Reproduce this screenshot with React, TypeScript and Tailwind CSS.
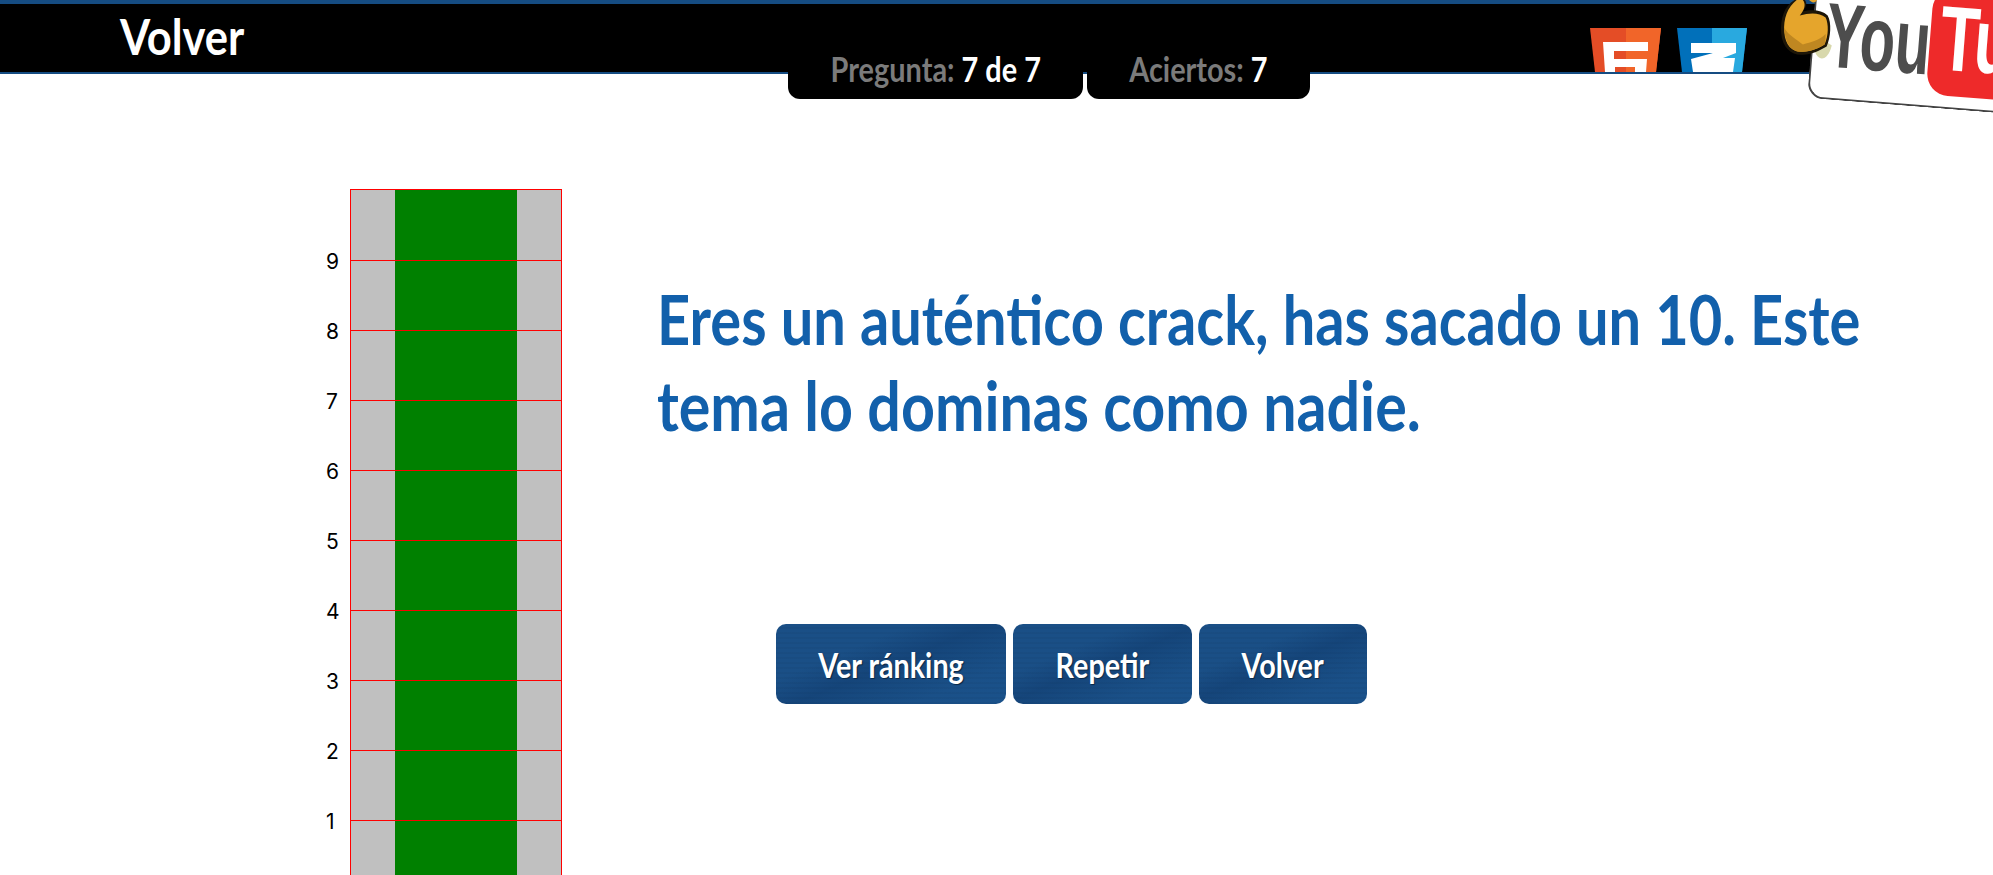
const rows = [null, 9, 8, 7, 6, 5, 4, 3, 2, 1]

const buttons = [
  { label: 'Ver ránking', width: 'w-[230px]' },
  { label: 'Repetir', width: 'w-[179px]' },
  { label: 'Volver', width: 'w-[168px]' },
]

function Html5Logo() {
  return (
    <svg width="71" height="44" viewBox="0 0 71 44">
      <path d="M0 0H71L66 44H5Z" fill="#e44d26" />
      <path d="M36 0H66V0H71L66 44H36Z" fill="#f16529" />
      <path d="M13 14H58V23H24V31H57L56 44H15Z" fill="#fff" />
      <path d="M25 39H45V44H25Z" fill="#e44d26" />
      <path d="M36 39H45V44H36Z" fill="#f16529" />
    </svg>
  )
}

function Css3Logo() {
  return (
    <svg width="70" height="44" viewBox="0 0 70 44">
      <path d="M0 0H70L65 44H5Z" fill="#0170ba" />
      <path d="M35 0H65V0H70L65 44H35Z" fill="#29a9df" />
      <path d="M14 15H59V25L46 30H58L56 44H16L14 31L36 25H14Z" fill="#fff" />
    </svg>
  )
}

function Fist() {
  return (
    <svg className="absolute left-[1780px] top-0" width="54" height="62" viewBox="0 0 52 60">
      <path d="M33 48C36 60 46 60 50 44L44 40Z" fill="#d8d8ac" />
      <path d="M14 0C4 6 0 18 1 32C2 47 12 54 22 53C30 53 38 49 45 45C49 36 50 22 46 15C40 9 30 9 22 11C26 6 26 3 24 0Z" fill="#1d1608" />
      <path d="M16 0C7 7 3 18 4 31C5 45 13 51 22 50C30 50 38 46 43 43C47 35 47 23 44 17C38 12 29 12 19 15C24 9 25 4 22 0Z" fill="#e5a52c" />
      <path d="M4 27C8 34 16 38 22 43C30 41 38 39 44 33C44 37 44 41 43 43C38 46 30 50 22 50C13 51 5 45 4 27Z" fill="#bf8721" />
      <path d="M28 0C32 4 34 2 36 0Z" fill="#e5a52c" />
    </svg>
  )
}

export default function App() {
  return (
    <div className="relative h-[875px] overflow-hidden bg-white font-['Lato',sans-serif]">
      <header className="flex h-[74px] items-end border-t-4 border-b-2 border-[#154c82] bg-black pl-[120px]">
        <a className="inline-block origin-left scale-x-[0.87] self-start pt-[2px] text-[50px] leading-[60px] font-bold text-white">
          Volver
        </a>
        <div className="mr-[246px] ml-auto flex gap-4">
          <Html5Logo />
          <Css3Logo />
        </div>
      </header>

      <div className="absolute top-[46px] left-[788px] flex gap-1 text-[34px] leading-[46px] font-bold text-white">
        <div className="flex h-[53px] w-[295px] items-end justify-center rounded-b-xl bg-black pb-[7px]">
          <span className="scale-x-[0.85] whitespace-nowrap">
            <span className="text-[#7b7b7b]">Pregunta: </span>7 de 7
          </span>
        </div>
        <div className="flex h-[53px] w-[223px] items-end justify-center rounded-b-xl bg-black pb-[7px]">
          <span className="scale-x-[0.85] whitespace-nowrap">
            <span className="text-[#7b7b7b]">Aciertos: </span>7
          </span>
        </div>
      </div>

      <div className="absolute top-[-32px] left-[1807px] flex h-[130px] w-[320px] origin-bottom-left rotate-[4.5deg] items-center rounded-[16px] border-b-2 border-l-2 border-[#444] bg-white pt-[2px] pl-[12px]">
        <span className="inline-block w-[104px] origin-left scale-x-[0.63] font-['Liberation_Sans',sans-serif] text-[92px] leading-none font-bold text-[#4d4d4d]">
          You
        </span>
        <div className="mb-[4px] flex h-[108px] w-[140px] items-center rounded-[22px] bg-[#ee2a2a] pb-[8px] pl-[10px]">
          <span className="inline-block origin-left scale-x-[0.7] font-['Liberation_Sans',sans-serif] text-[92px] leading-none font-bold text-white">
            Tu
          </span>
        </div>
      </div>
      <Fist />

      <main className="flex">
        <div className="mt-[115px] ml-[350px] flex w-[212px] shrink-0 flex-col divide-y divide-[#f00] border-t border-r border-l border-[#f00]">
          {rows.map((n, i) => (
            <div key={i} className={`relative flex shrink-0 ${n ? 'h-[70px]' : 'h-[71px]'}`}>
              <div className="w-[44px] bg-[#c0c0c0]" />
              <div className="w-[122px] bg-[#008000]" />
              <div className="flex-1 bg-[#c0c0c0]" />
              {n && (
                <span className="absolute top-[-13px] left-[-25px] font-['Inter',sans-serif] text-[21px] leading-[28px] text-black">
                  {n}
                </span>
              )}
            </div>
          ))}
        </div>

        <div className="ml-[95px] flex flex-col">
          <h1 className="mt-[202px] text-[68px] leading-[86px] font-bold whitespace-nowrap text-[#1260ab]">
            <span className="block origin-left scale-x-[0.85]">Eres un auténtico crack, has sacado un 10. Este</span>
            <span className="block origin-left scale-x-[0.87]">tema lo dominas como nadie.</span>
          </h1>
          <div className="mt-[176px] ml-[119px] flex gap-[7px]">
            {buttons.map((b) => (
              <button
                key={b.label}
                className={`flex h-[80px] items-center justify-center rounded-[10px] bg-[repeating-linear-gradient(0deg,rgba(0,0,0,0.035)_0px,rgba(0,0,0,0.035)_2px,transparent_2px,transparent_5px),linear-gradient(158deg,#1a4f86_0%,#1a4f86_32%,#15457a_50%,#174a80_62%,#1a5088_78%,#1a528b_100%)] text-[34px] font-bold text-white [text-shadow:1px_1px_1px_#0b2744] ${b.width}`}
              >
                <span className="scale-x-[0.845] whitespace-nowrap">{b.label}</span>
              </button>
            ))}
          </div>
        </div>
      </main>
    </div>
  )
}
